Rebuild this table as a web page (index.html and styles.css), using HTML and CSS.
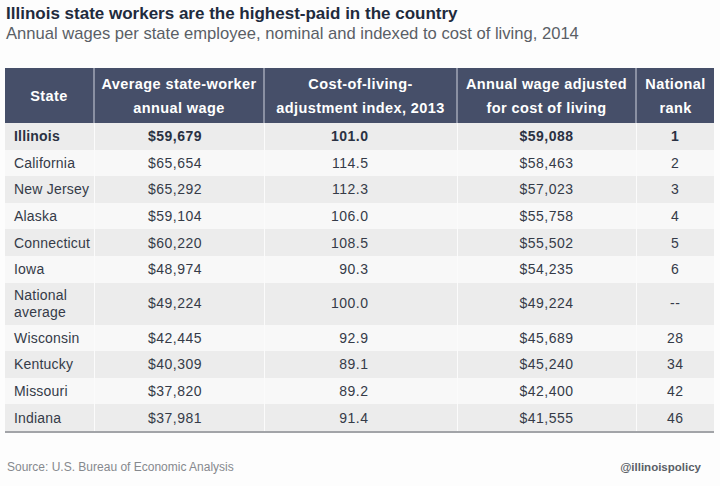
FILE: index.html
```html
<!DOCTYPE html>
<html lang="en">
<head>
<meta charset="utf-8">
<title>Illinois state workers</title>
<link rel="stylesheet" href="styles.css">
</head>
<body>
<div class="page">
  <header class="heading">
    <h1 class="title">Illinois state workers are the highest-paid in the country</h1>
    <p class="subtitle">Annual wages per state employee, nominal and indexed to cost of living, 2014</p>
  </header>
  <table class="wages">
    <colgroup>
      <col class="w-state">
      <col class="w-avg">
      <col class="w-col">
      <col class="w-adj">
      <col class="w-rank">
    </colgroup>
    <thead>
      <tr>
        <th>State</th>
        <th>Average state-worker<br>annual wage</th>
        <th>Cost-of-living-<br>adjustment index, 2013</th>
        <th>Annual wage adjusted<br>for cost of living</th>
        <th>National<br>rank</th>
      </tr>
    </thead>
    <tbody>
      <tr class="hl"><td class="c-state">Illinois</td><td class="c-avg">$59,679</td><td class="c-col">101.0</td><td class="c-adj">$59,088</td><td class="c-rank">1</td></tr>
      <tr><td class="c-state">California</td><td class="c-avg">$65,654</td><td class="c-col">114.5</td><td class="c-adj">$58,463</td><td class="c-rank">2</td></tr>
      <tr><td class="c-state">New Jersey</td><td class="c-avg">$65,292</td><td class="c-col">112.3</td><td class="c-adj">$57,023</td><td class="c-rank">3</td></tr>
      <tr><td class="c-state">Alaska</td><td class="c-avg">$59,104</td><td class="c-col">106.0</td><td class="c-adj">$55,758</td><td class="c-rank">4</td></tr>
      <tr><td class="c-state">Connecticut</td><td class="c-avg">$60,220</td><td class="c-col">108.5</td><td class="c-adj">$55,502</td><td class="c-rank">5</td></tr>
      <tr><td class="c-state">Iowa</td><td class="c-avg">$48,974</td><td class="c-col">90.3</td><td class="c-adj">$54,235</td><td class="c-rank">6</td></tr>
      <tr class="tall"><td class="c-state">National<br>average</td><td class="c-avg">$49,224</td><td class="c-col">100.0</td><td class="c-adj">$49,224</td><td class="c-rank">--</td></tr>
      <tr><td class="c-state">Wisconsin</td><td class="c-avg">$42,445</td><td class="c-col">92.9</td><td class="c-adj">$45,689</td><td class="c-rank">28</td></tr>
      <tr><td class="c-state">Kentucky</td><td class="c-avg">$40,309</td><td class="c-col">89.1</td><td class="c-adj">$45,240</td><td class="c-rank">34</td></tr>
      <tr><td class="c-state">Missouri</td><td class="c-avg">$37,820</td><td class="c-col">89.2</td><td class="c-adj">$42,400</td><td class="c-rank">42</td></tr>
      <tr><td class="c-state">Indiana</td><td class="c-avg">$37,981</td><td class="c-col">91.4</td><td class="c-adj">$41,555</td><td class="c-rank">46</td></tr>
    </tbody>
  </table>
  <footer class="foot">
    <span class="source">Source: U.S. Bureau of Economic Analysis</span>
    <span class="handle">@illinoispolicy</span>
  </footer>
</div>
</body>
</html>
```

FILE: styles.css
```css
html, body {
  margin: 0;
  padding: 0;
  background: #fdfdfd;
}
body {
  font-family: "Liberation Sans", Arial, sans-serif;
  width: 720px;
  height: 486px;
  overflow: hidden;
}
.page {
  display: flex;
  flex-direction: column;
  padding: 4px 6px 0 5px;
}
.heading {
  padding-left: 1px;
}
.title {
  margin: 0;
  font-size: 17px;
  line-height: 20px;
  font-weight: bold;
  color: #1f2b3d;
}
.subtitle {
  margin: 0;
  font-size: 16.6px;
  line-height: 20px;
  color: #5a5f66;
}
.wages {
  margin-top: 24px;
  width: 709px;
  border-collapse: collapse;
  table-layout: fixed;
  border-bottom: 2px solid #a2a4a8;
}
.w-state { width: 89px; }
.w-avg { width: 170px; }
.w-col { width: 193px; }
.w-adj { width: 179px; }
.w-rank { width: 78px; }
.wages th {
  background: #464f69;
  color: #ffffff;
  font-size: 14.5px;
  line-height: 24px;
  font-weight: bold;
  letter-spacing: 0.4px;
  text-align: center;
  padding: 4px 0 3px;
  border-left: 2px solid #8a90a3;
  white-space: nowrap;
}
.wages th:first-child {
  border-left: none;
}
.wages td {
  font-size: 14px;
  letter-spacing: 0.5px;
  color: #353b48;
  height: 26.6px;
  padding: 0;
  border-left: 1px solid #fbfbfb;
  text-align: center;
  vertical-align: middle;
}
.wages td:first-child {
  border-left: none;
}
.wages tbody tr:nth-child(odd) td {
  background: #ececec;
}
.wages tbody tr:nth-child(even) td {
  background: #f8f8f8;
}
.wages tr.tall td {
  height: 42px;
  line-height: 17px;
}
.wages tr.hl td {
  font-weight: bold;
  color: #2a3142;
}
.wages td.c-state {
  text-align: left;
  padding-left: 9px;
  letter-spacing: 0.2px;
  white-space: nowrap;
}
.wages td.c-avg {
  padding-right: 8px;
}
.wages td.c-col {
  text-align: right;
  padding-right: 88px;
}
.foot {
  display: flex;
  justify-content: space-between;
  align-items: center;
  margin-top: 27px;
  padding: 0 13px 0 2px;
}
.source {
  font-size: 12px;
  color: #86898e;
}
.handle {
  font-size: 11.5px;
  font-weight: bold;
  color: #5a5e66;
}
```
